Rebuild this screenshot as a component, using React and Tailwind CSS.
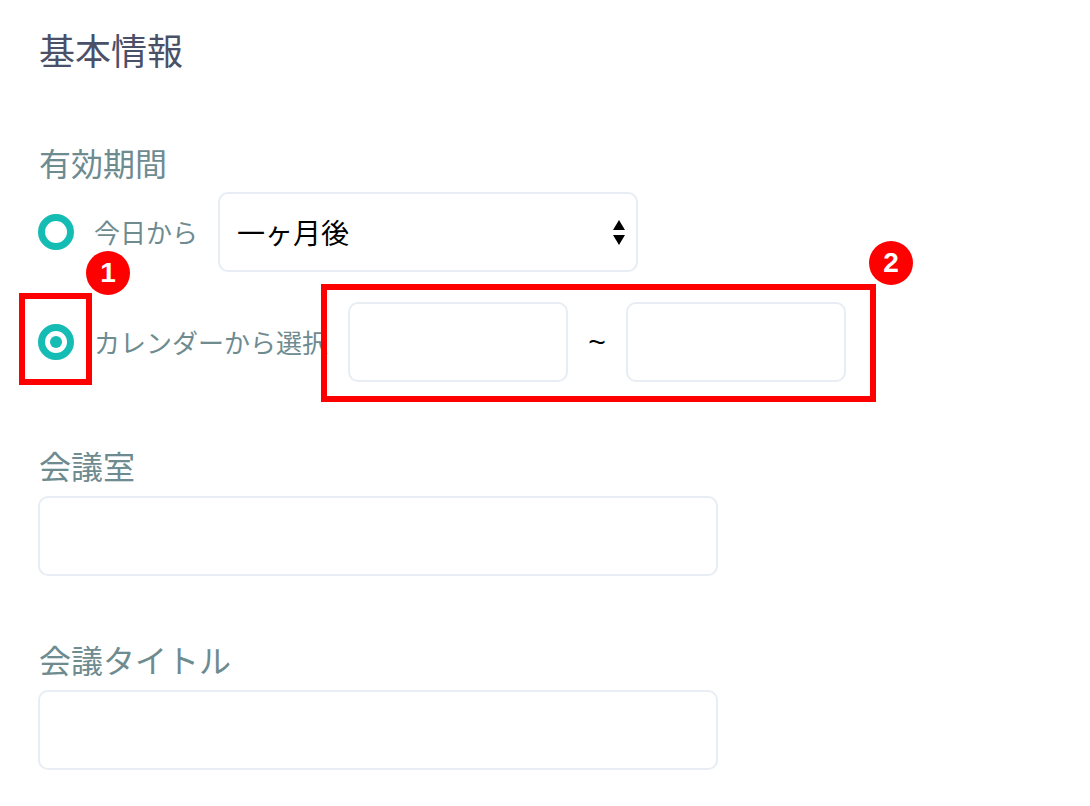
import React from "react";

const jp = { fontFamily: '"Noto Sans CJK JP", "Noto Sans", sans-serif' };

function Radio({ checked }) {
  return (
    <div className="w-9 h-9 shrink-0 rounded-full border-[7px] border-[#14bcb3] flex items-center justify-center">
      {checked && <div className="w-3 h-3 rounded-full bg-[#14bcb3]" />}
    </div>
  );
}

function Badge({ n, className }) {
  return (
    <div
      className={
        "absolute w-[44px] h-[44px] rounded-full bg-[#ff0000] text-white flex items-center justify-center text-[28px] font-bold leading-none " +
        className
      }
      style={{ fontFamily: '"Liberation Sans", Arial, sans-serif' }}
    >
      {n}
    </div>
  );
}

function Box({ className }) {
  return <div className={"h-[80px] border-2 border-[#e8edf3] rounded-[10px] bg-white " + className} />;
}

export default function App() {
  return (
    <div className="min-h-screen bg-white pl-[38px] pt-[31px]" style={jp}>
      <div className="text-[36px] leading-none h-[36px] text-[#4a5068] pl-[1px]">基本情報</div>

      <div className="mt-[79px] text-[32px] leading-none h-[32px] text-[#6e8b90] pl-[1px]">有効期間</div>

      <div className="mt-[14px] h-[80px] flex items-center gap-[20px]">
        <Radio />
        <span className="text-[26px] leading-none text-[#6e8b90]">今日から</span>
        <div className="w-[420px] h-[80px] border-2 border-[#e8edf3] rounded-[10px] flex items-center justify-between pl-[17px] pr-[11px]">
          <span className="text-[28px] leading-none text-black">一ヶ月後</span>
          <svg width="12" height="25" viewBox="0 0 12 25">
            <polygon points="6,0 12,10 0,10" fill="#000" />
            <polygon points="0,15 12,15 6,25" fill="#000" />
          </svg>
        </div>
      </div>

      <div className="relative mt-[30px] h-[80px] flex items-center gap-[20px]">
        <Radio checked />
        <span className="text-[26px] leading-none text-[#6e8b90] whitespace-nowrap">カレンダーから選択</span>
        <div className="flex items-center">
          <Box className="w-[220px]" />
          <span
            className="w-[58px] text-center text-[30px] leading-none text-black"
            style={{ fontFamily: '"Liberation Sans", Arial, sans-serif' }}
          >
            ~
          </span>
          <Box className="w-[220px]" />
        </div>

        <div className="absolute left-[-19px] top-[-9px] w-[73px] h-[92px] border-[6px] border-[#ff0000]" />
        <Badge n="1" className="left-[48px] top-[-51px]" />
        <div className="absolute left-[283px] top-[-18px] w-[555px] h-[118px] border-[6px] border-[#ff0000]" />
        <Badge n="2" className="left-[831px] top-[-61px]" />
      </div>

      <div className="mt-[67px] text-[32px] leading-none h-[32px] text-[#6e8b90] pl-[1px]">会議室</div>
      <Box className="mt-[15px] w-[680px]" />

      <div className="mt-[67px] text-[32px] leading-none h-[32px] text-[#6e8b90] pl-[1px]">会議タイトル</div>
      <Box className="mt-[15px] w-[680px]" />
    </div>
  );
}
